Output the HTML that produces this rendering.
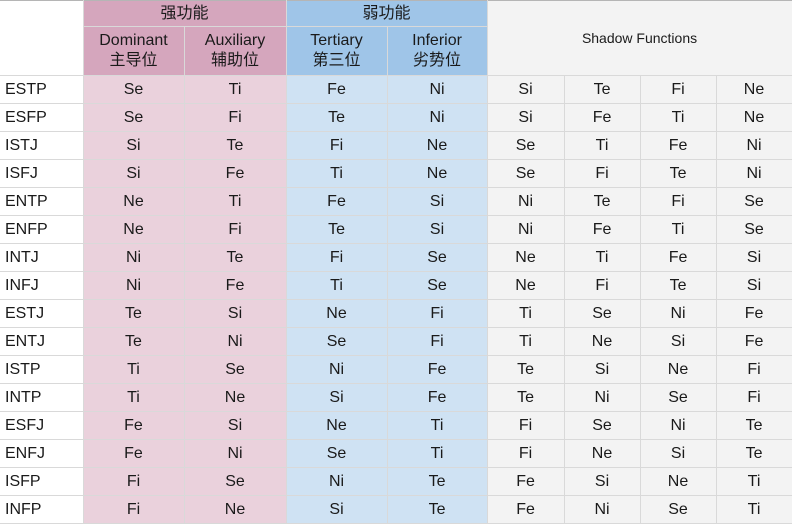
<!DOCTYPE html>
<html><head><meta charset="utf-8"><style>
html,body{margin:0;padding:0;background:#fff;}
body{width:792px;height:524px;overflow:hidden;}
table{border-collapse:collapse;table-layout:fixed;width:792px;font-family:"Liberation Sans","Noto Sans CJK SC",sans-serif;font-size:16px;color:#1a1a1a;}
td{border:1px solid #d9d9d9;padding:0;text-align:center;height:27px;line-height:27px;overflow:hidden;white-space:nowrap;}
tr:first-child td{border-top:1px solid #b5b5b5;height:25px;line-height:25px;}
td.l{text-align:left;padding-left:5px;background:#fff;border-left:none;}
.ph{background:#d5a6bd;}
.bh{background:#9fc5e8;}
.p{background:#ead1dc;}
.b{background:#cfe2f3;}
.g{background:#f3f3f3;}
.h2 td{height:48px;line-height:20px;}
.sh{font-size:14px;}
</style></head><body>
<table>
<colgroup><col style="width:83px"><col style="width:101px"><col style="width:102px"><col style="width:101px"><col style="width:100px"><col style="width:77px"><col style="width:76px"><col style="width:76px"><col style="width:76px"></colgroup>
<tr><td class="l" rowspan="2"></td><td class="ph" colspan="2">强功能</td><td class="bh" colspan="2">弱功能</td><td class="g sh" colspan="4" rowspan="2">Shadow Functions</td></tr>
<tr class="h2"><td class="ph">Dominant<br>主导位</td><td class="ph">Auxiliary<br>辅助位</td><td class="bh">Tertiary<br>第三位</td><td class="bh">Inferior<br>劣势位</td></tr>
<tr><td class="l">ESTP</td><td class="p">Se</td><td class="p">Ti</td><td class="b">Fe</td><td class="b">Ni</td><td class="g">Si</td><td class="g">Te</td><td class="g">Fi</td><td class="g">Ne</td></tr>
<tr><td class="l">ESFP</td><td class="p">Se</td><td class="p">Fi</td><td class="b">Te</td><td class="b">Ni</td><td class="g">Si</td><td class="g">Fe</td><td class="g">Ti</td><td class="g">Ne</td></tr>
<tr><td class="l">ISTJ</td><td class="p">Si</td><td class="p">Te</td><td class="b">Fi</td><td class="b">Ne</td><td class="g">Se</td><td class="g">Ti</td><td class="g">Fe</td><td class="g">Ni</td></tr>
<tr><td class="l">ISFJ</td><td class="p">Si</td><td class="p">Fe</td><td class="b">Ti</td><td class="b">Ne</td><td class="g">Se</td><td class="g">Fi</td><td class="g">Te</td><td class="g">Ni</td></tr>
<tr><td class="l">ENTP</td><td class="p">Ne</td><td class="p">Ti</td><td class="b">Fe</td><td class="b">Si</td><td class="g">Ni</td><td class="g">Te</td><td class="g">Fi</td><td class="g">Se</td></tr>
<tr><td class="l">ENFP</td><td class="p">Ne</td><td class="p">Fi</td><td class="b">Te</td><td class="b">Si</td><td class="g">Ni</td><td class="g">Fe</td><td class="g">Ti</td><td class="g">Se</td></tr>
<tr><td class="l">INTJ</td><td class="p">Ni</td><td class="p">Te</td><td class="b">Fi</td><td class="b">Se</td><td class="g">Ne</td><td class="g">Ti</td><td class="g">Fe</td><td class="g">Si</td></tr>
<tr><td class="l">INFJ</td><td class="p">Ni</td><td class="p">Fe</td><td class="b">Ti</td><td class="b">Se</td><td class="g">Ne</td><td class="g">Fi</td><td class="g">Te</td><td class="g">Si</td></tr>
<tr><td class="l">ESTJ</td><td class="p">Te</td><td class="p">Si</td><td class="b">Ne</td><td class="b">Fi</td><td class="g">Ti</td><td class="g">Se</td><td class="g">Ni</td><td class="g">Fe</td></tr>
<tr><td class="l">ENTJ</td><td class="p">Te</td><td class="p">Ni</td><td class="b">Se</td><td class="b">Fi</td><td class="g">Ti</td><td class="g">Ne</td><td class="g">Si</td><td class="g">Fe</td></tr>
<tr><td class="l">ISTP</td><td class="p">Ti</td><td class="p">Se</td><td class="b">Ni</td><td class="b">Fe</td><td class="g">Te</td><td class="g">Si</td><td class="g">Ne</td><td class="g">Fi</td></tr>
<tr><td class="l">INTP</td><td class="p">Ti</td><td class="p">Ne</td><td class="b">Si</td><td class="b">Fe</td><td class="g">Te</td><td class="g">Ni</td><td class="g">Se</td><td class="g">Fi</td></tr>
<tr><td class="l">ESFJ</td><td class="p">Fe</td><td class="p">Si</td><td class="b">Ne</td><td class="b">Ti</td><td class="g">Fi</td><td class="g">Se</td><td class="g">Ni</td><td class="g">Te</td></tr>
<tr><td class="l">ENFJ</td><td class="p">Fe</td><td class="p">Ni</td><td class="b">Se</td><td class="b">Ti</td><td class="g">Fi</td><td class="g">Ne</td><td class="g">Si</td><td class="g">Te</td></tr>
<tr><td class="l">ISFP</td><td class="p">Fi</td><td class="p">Se</td><td class="b">Ni</td><td class="b">Te</td><td class="g">Fe</td><td class="g">Si</td><td class="g">Ne</td><td class="g">Ti</td></tr>
<tr><td class="l">INFP</td><td class="p">Fi</td><td class="p">Ne</td><td class="b">Si</td><td class="b">Te</td><td class="g">Fe</td><td class="g">Ni</td><td class="g">Se</td><td class="g">Ti</td></tr>
</table>
</body></html>
